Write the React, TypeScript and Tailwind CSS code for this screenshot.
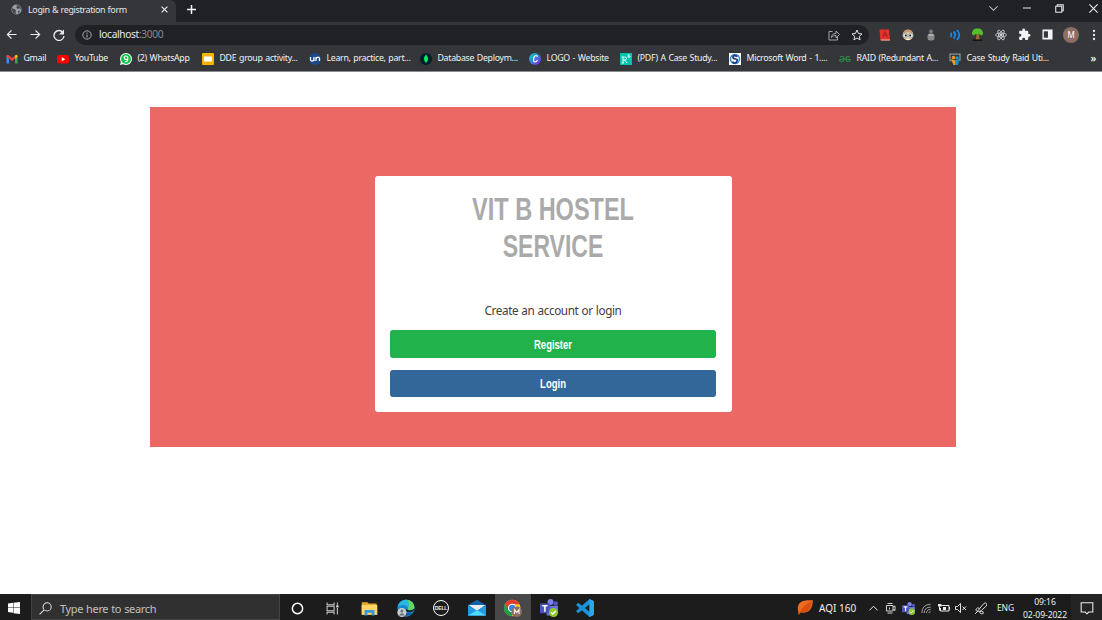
import type { ReactNode } from "react";

const UI = "font-['Noto_Sans','Open_Sans',sans-serif]";

function Ico({ s = 12, vb = "0 0 24 24", children, className = "" }: { s?: number; vb?: string; children: ReactNode; className?: string }) {
  return (
    <svg width={s} height={s} viewBox={vb} fill="none" className={"shrink-0 " + className}>
      {children}
    </svg>
  );
}

function Slot({ w, children, className = "" }: { w: string; children?: ReactNode; className?: string }) {
  return <div className={"flex h-full shrink-0 items-center justify-center " + w + " " + className}>{children}</div>;
}

const Globe = () => (
  <Ico s={11}>
    <circle cx="12" cy="12" r="11" fill="#9aa0a6" />
    <path d="M2 9c4 0 5 3 9 4l-1 4 1 5C5 21 2 17 2 12zM11 2l3 3-3 3 4 3 3-2 4 3c0-5-4-10-11-10zM15 15l5-1-4 7z" fill="#45474b" />
  </Ico>
);

function TabStrip() {
  return (
    <div className="flex h-[22px] shrink-0 bg-[#202124]">
      <div className="flex h-full w-[176px] items-center rounded-tr-[6px] bg-[#35363a] pb-[4px]">
        <span className="ml-[11px] flex"><Globe /></span>
        <span className="ml-[6px] w-[126px] text-[9px] tracking-[-0.38px] whitespace-nowrap text-[#e4e6e9] [word-spacing:0.4px]">Login &amp; registration form</span>
        <Ico s={7} className="ml-[7px]"><path d="M2 2l20 20M22 2L2 22" stroke="#e8eaed" strokeWidth="4" /></Ico>
      </div>
      <div className="flex w-[31px] items-center justify-center pb-[3px]">
        <Ico s={9}><path d="M12 0v24M0 12h24" stroke="#f1f3f4" strokeWidth="4" /></Ico>
      </div>
      <div className="ml-auto flex h-[16px]">
        <Slot w="w-[33px]"><Ico s={9}><path d="M1 6l11 11L23 6" stroke="#ccc" strokeWidth="2.700" /></Ico></Slot>
        <Slot w="w-[33px]"><Ico s={8}><path d="M0 12h24" stroke="#e8eaed" strokeWidth="3" /></Ico></Slot>
        <Slot w="w-[33px]"><Ico s={9}><path d="M2 6h16v16H2zM6 6V2h16v16h-4" stroke="#e8eaed" strokeWidth="2.800" /></Ico></Slot>
        <Slot w="w-[26px]" className="pl-[8px]"><Ico s={9}><path d="M1 1l22 22M23 1L1 23" stroke="#e8eaed" strokeWidth="3" /></Ico></Slot>
      </div>
    </div>
  );
}

function Toolbar() {
  return (
    <div className="flex h-[25px] shrink-0 items-center bg-[#35363a]">
      <Slot w="w-[23px]"><Ico s={11}><path d="M23 12H3M12 3l-9 9 9 9" stroke="#e8eaed" strokeWidth="2.700" /></Ico></Slot>
      <Slot w="w-[24px]"><Ico s={11}><path d="M1 12h20M12 3l9 9-9 9" stroke="#e8eaed" strokeWidth="2.700" /></Ico></Slot>
      <Slot w="w-[23px]"><Ico s={12}><path d="M20 7a10 10 0 1 0 2 7" stroke="#e8eaed" strokeWidth="2.700" /><path d="M22 1v10H12z" fill="#e8eaed" /></Ico></Slot>
      <div className="ml-[5px] flex h-[20px] w-[794px] shrink-0 items-center rounded-full bg-[#202124]">
        <Ico s={10} className="ml-[7px]"><circle cx="12" cy="12" r="10" stroke="#a5a9ae" strokeWidth="2.400" /><path d="M12 11v7M12 6v3" stroke="#a5a9ae" strokeWidth="2.600" /></Ico>
        <span className="ml-[7px] text-[10.200px] tracking-[-0.35px] text-[#e8eaed]">localhost<span className="text-[#868a90]">:3000</span></span>
        <div className="ml-auto flex h-full pr-[1px]">
          <Slot w="w-[23px]"><Ico s={12}><path d="M9 5H2v17h17v-6M7 17c0-6 4-8 9-8V4l7 7-7 7v-5c-5 0-7 1-9 4z" stroke="#b2b5b9" strokeWidth="1.800" /></Ico></Slot>
          <Slot w="w-[23px]"><Ico s={12}><path d="M12 2l3 7 7 .8-5.300 4.800 1.500 7.200L12 18l-6.200 3.800 1.500-7.200L2 9.800 9 9z" stroke="#e0e2e5" strokeWidth="2" /></Ico></Slot>
        </div>
      </div>
      <div className="ml-[4px] flex h-full">
        <Slot w="w-[23.3px]"><Ico s={12}><path d="M1 1h19l2 22H3z" fill="#df342b" /><path d="M3 21h19v2H4z" fill="#f0b9a9" /><path d="M8 16l4-11 5 11M9 12h6" stroke="#9c211d" strokeWidth="1.800" /></Ico></Slot>
        <Slot w="w-[23.3px]"><Ico s={12}><circle cx="12" cy="12" r="10.500" fill="#f0caa4" /><path d="M2 9Q4 1 12 1t10 8L12 6z" fill="#c69a74" /><circle cx="6.500" cy="13" r="4.700" fill="#edf7f7" stroke="#829a9c" strokeWidth="1.500" /><circle cx="17.500" cy="13" r="4.700" fill="#edf7f7" stroke="#829a9c" strokeWidth="1.500" /><circle cx="7.500" cy="13" r="2.200" fill="#222" /><circle cx="16.500" cy="13" r="2.200" fill="#222" /><path d="M9 21h6" stroke="#fff" strokeWidth="2" /></Ico></Slot>
        <Slot w="w-[23.3px]"><Ico s={12}><circle cx="12" cy="5" r="4" fill="#77797d" /><rect x="5" y="9" width="14" height="14" rx="5" fill="#88898b" /><path d="M7 12h10" stroke="#d0d0d0" strokeWidth="2" /></Ico></Slot>
        <Slot w="w-[23.3px]"><Ico s={12}><path d="M3 8q4 4 0 8M9 5q7 7 0 14M16 2q9 10 0 20" stroke="#138bec" strokeWidth="3.600" /></Ico></Slot>
        <Slot w="w-[23.3px]"><Ico s={13}><path d="M10 11h5l1 11H9z" fill="#9c642f" /><path d="M5 14a5 5 0 0 1-2-8Q5 0 12 1q7-1 9 5a5 5 0 0 1-2 8l-4-3-3 1-3-1z" fill="#55bd27" /><path d="M3 21h18v3H3z" fill="#15180e" /></Ico></Slot>
        <Slot w="w-[23.3px]"><Ico s={12}><g stroke="#c8cacc" strokeWidth="1.700"><ellipse cx="12" cy="12" rx="11" ry="4" /><ellipse cx="12" cy="12" rx="11" ry="4" transform="rotate(60 12 12)" /><ellipse cx="12" cy="12" rx="11" ry="4" transform="rotate(120 12 12)" /></g><circle cx="12" cy="12" r="2.300" fill="#ddd" /></Ico></Slot>
        <Slot w="w-[23.3px]"><Ico s={13}><path d="M20.500 11H19V7a2 2 0 0 0-2-2h-4V3.500a2.500 2.500 0 0 0-5 0V5H4a2 2 0 0 0-2 2v3.800h1.500a2.700 2.700 0 0 1 0 5.400H2V20a2 2 0 0 0 2 2h3.800v-1.500a2.700 2.700 0 0 1 5.400 0V22H17a2 2 0 0 0 2-2v-4h1.500a2.500 2.500 0 0 0 0-5z" fill="#f1f3f4" /></Ico></Slot>
        <Slot w="w-[23.3px]"><Ico s={11}><path d="M1 1h22v22H1z" fill="#f1f3f4" /><path d="M4 5h9v14H4z" fill="#35363a" /></Ico></Slot>
        <Slot w="w-[23.3px]"><span className="flex size-[16px] items-center justify-center rounded-full bg-[#8d6e63] text-[8px] text-white">M</span></Slot>
        <Slot w="w-[19px]" className="pl-[3px]"><Ico s={12}><circle cx="12" cy="4" r="2.300" fill="#eee" /><circle cx="12" cy="12" r="2.300" fill="#eee" /><circle cx="12" cy="20" r="2.300" fill="#eee" /></Ico></Slot>
      </div>
    </div>
  );
}

const bookmarks: { w: string; label: string; icon: ReactNode }[] = [
  { w: "w-[51px]", label: "Gmail", icon: <><path d="M1 5v16h5V11z" fill="#4285f4" /><path d="M23 5v16h-5V11z" fill="#34a853" /><path d="M1 5q2-3 5 0l6 5 6-5v6l-6 5-6-5-5-4z" fill="#ea4335" /><path d="M18 5q4-3 5 1v2l-5 4z" fill="#fbbc04" /></> },
  { w: "w-[63px]", label: "YouTube", icon: <><rect x="0" y="4" width="24" height="17" rx="4" fill="#f00" /><path d="M9.500 8.500v8l7-4z" fill="#fff" /></> },
  { w: "w-[82px]", label: "(2) WhatsApp", icon: <><circle cx="12" cy="12" r="12" fill="#fff" /><path d="M0 24l2-7 5 5z" fill="#fff" /><circle cx="12" cy="12" r="10" fill="#12c04a" /><path d="M15.500 9.500a3.500 3.500 0 1 1-7 0 3.500 3.500 0 0 1 7 0v3q0 5-6 5" stroke="#fff" strokeWidth="2.400" /></> },
  { w: "w-[107px]", label: "DDE group activity...", icon: <><rect width="24" height="24" rx="2" fill="#f4b400" /><path d="M4 7h16v10H4z" fill="#fff" /></> },
  { w: "w-[111px]", label: "Learn, practice, part...", icon: <><circle cx="12" cy="12" r="12" fill="#1b4b88" /><path d="M3 8v5q0 3 3 3t4-3V8v8M14 16V8v4q1-4 4-4t3 3v5" stroke="#fff" strokeWidth="2.500" /></> },
  { w: "w-[109px]", label: "Database Deploym...", icon: <><circle cx="12" cy="12" r="12" fill="#001e2b" /><path d="M12 3q8 9 0 17Q4 12 12 3z" fill="#00ed64" /></> },
  { w: "w-[91px]", label: "LOGO - Website", icon: <><defs><linearGradient id="cv" x1="0" y1="0" x2="1" y2="1"><stop offset=".15" stopColor="#00c4cc" /><stop offset=".9" stopColor="#7d2ae8" /></linearGradient></defs><circle cx="12" cy="12" r="12" fill="url(#cv)" /><path d="M16 8q1-3-2-3c-5 0-7 12-2 13q3 0 5-4" stroke="#fff" strokeWidth="2.300" /></> },
  { w: "w-[109px]", label: "(PDF) A Case Study...", icon: <><path d="M0 0h24v24H0z" fill="#00c2ae" /><path d="M6 20V8h3q4 0 4 3t-4 3H6m3 0l5 6M3 20h5M3 8h3M20 4q-4-2-4 2t4 2V6" stroke="#fff" strokeWidth="1.900" /></> },
  { w: "w-[110px]", label: "Microsoft Word - 1....", icon: <><path d="M0 0h24v24H0z" fill="#fff" /><circle cx="12" cy="12" r="9" stroke="#3c87c8" strokeWidth="3" /><path d="M17 7q-8-4-9 0t5 5 2 6-8-1" stroke="#123b83" strokeWidth="3.500" /></> },
  { w: "w-[110px]", label: "RAID (Redundant A...", icon: <path d="M2 8q8-3 8 4t-8 4q-3-4 8-4h4q11 0 8 4-8 3-8-4t8-4" stroke="#2f8d46" strokeWidth="2.300" /> },
  { w: "w-[120px]", label: "Case Study Raid Uti...", icon: <><path d="M5 15H2V2h20v12h-4" stroke="#88949c" strokeWidth="2.500" /><circle cx="9" cy="9" r="3.500" fill="#f49a20" /><circle cx="16" cy="10" r="3.500" fill="#1498cb" /><path d="M4 12l9 3v9H9z" fill="#f49a20" /><path d="M12 14h8l-2 10h-5z" fill="#1498cb" /></> },
];

function Bookmarks() {
  return (
    <div className="flex h-[25px] shrink-0 items-center border-b border-[#8c8c90] bg-[#35363a] pb-[1px] pl-[6px] text-[8.800px] tracking-[-0.3px] text-[#f1f3f4] [word-spacing:0.7px]">
      {bookmarks.map((b) => (
        <div key={b.label} className={"flex shrink-0 items-center whitespace-nowrap " + b.w}>
          <Ico s={12}>{b.icon}</Ico>
          <span className="ml-[5.500px]">{b.label}</span>
        </div>
      ))}
      <span className="ml-auto pr-[6px] pb-[2px] text-[10px] font-semibold">»</span>
    </div>
  );
}

function Taskbar() {
  return (
    <div className="flex h-[26px] shrink-0 items-center bg-[#1c1c1c] text-[#f0f0f0]">
      <Slot w="w-[27px]" className="pt-[2px]"><Ico s={12}><path d="M0 3l10-1.500V11H0zM11 1.400L24 0v11H11zM0 12h10v9.500L0 20zM11 12h13v12l-13-1.500z" fill="#fff" /></Ico></Slot>
      <div className="ml-[4px] flex h-full w-[249px] items-center border border-[#444] bg-[#303030] pt-[2px]">
        <Ico s={13} className="ml-[7px]"><circle cx="15" cy="9" r="7.500" stroke="#ddd" strokeWidth="1.900" /><path d="M9.500 14.500L1 23" stroke="#ddd" strokeWidth="2" /></Ico>
        <span className="ml-[8px] text-[11px] tracking-[-0.35px] text-[#c2c2c2] [word-spacing:0.5px]">Type here to search</span>
      </div>
      <div className="flex h-full">
        <Slot w="w-[35px]" className="pt-[2px]"><Ico s={13}><circle cx="12" cy="12" r="9.500" stroke="#fff" strokeWidth="2.700" /></Ico></Slot>
        <Slot w="w-[35px]" className="pt-[2px]"><Ico s={13}><path d="M2 1v4h13V1M2 23v-4h13v4M2 8h13v8H2zM21 1v4M21 11v12" stroke="#ccc" strokeWidth="1.900" /><path d="M19 6h4v4h-4z" fill="#eee" /></Ico></Slot>
        <Slot w="w-[38px]" className="pt-[2px]"><Ico s={17}><path d="M1 3h8l2 2h11v15H1z" fill="#e8a820" /><path d="M1 7h22v14H1z" fill="#ffd667" /><path d="M5 22v-8h14v8h-4v-4H9v4z" fill="#3a96da" /></Ico></Slot>
        <Slot w="w-[35px]" className="pt-[2px]"><Ico s={18}><circle cx="12" cy="12" r="11.500" fill="#158bd5" /><path d="M1 10Q4 1 12 1c7 0 11 5 11 10 0 4-6 5-9 3 3-4-3-9-13-4z" fill="#27b9dd" /><path d="M14 1q9 3 9 10 0 4-6 4l-3-1q4-6 0-13z" fill="#64d85b" /><path d="M14 14q3 3 9-1-1 3-3 4-6 2-10-3z" fill="#1c1c1c" /><path d="M9 11q-3 9 12 8-5 5-12 3-6-4 0-11z" fill="#1257a2" /><circle cx="6.500" cy="18" r="6" fill="#c9cdd0" /><circle cx="6.500" cy="16" r="2" fill="#65717b" /><path d="M2.500 22q4-6 8 0z" fill="#65717b" /></Ico></Slot>
        <Slot w="w-[36px]" className="pt-[2px]"><span className="flex size-[16px] items-center justify-center rounded-full border border-white font-['Liberation_Sans',sans-serif] text-[5px] font-bold tracking-[-0.2px]">DELL</span></Slot>
        <Slot w="w-[36px]" className="pt-[2px]"><Ico s={18}><path d="M0 8l12-7 12 7v14H0z" fill="#0d61a9" /><path d="M1 8h22L12 16z" fill="#e9edf1" /><path d="M0 8l12 8 12-8v14H0z" fill="#1e9be4" /><path d="M0 22l12-7 12 7z" fill="#50d9ff" /></Ico></Slot>
        <Slot w="w-[36px]" className="bg-[#484848] pt-[2px]"><Ico s={18}><circle cx="11" cy="12" r="11" fill="#f7c51e" /><path d="M1 7Q5 1 11 1t10 6H11z" fill="#e33b2e" /><path d="M1 7a11 11 0 0 0 9 16l5-9-8 0z" fill="#229e4b" /><path d="M1 7l6 8 4-8z" fill="#e33b2e" /><circle cx="11" cy="12" r="5" fill="#3b82e8" stroke="#fff" strokeWidth="1.500" /><circle cx="17" cy="17" r="7" fill="#8d6e63" /><path d="M14 20v-6l3 4 3-4v6" stroke="#eee" strokeWidth="1.500" /></Ico></Slot>
        <Slot w="w-[36px]" className="pt-[2px]"><TeamsIcon s={18} /></Slot>
        <Slot w="w-[36px]" className="pt-[2px]"><Ico s={18}><path d="M18 0l6 3v18l-6 3L0 8l3-3 15 12V7L3 19l-3-3z" fill="#1894d9" /><path d="M18 0l6 3v18l-6 3z" fill="#2aa8ed" /></Ico></Slot>
      </div>
      <div className="ml-auto flex h-full items-center">
        <div className="flex h-full items-center pt-[2px]">
          <Slot w="w-[22px]"><Ico s={16} className="-mt-[2px]"><path d="M2 20C-1 6 5 1 24 2c-1 15-7 20-18 18l-4 4z" fill="#ef6b20" /><path d="M3 21Q9 9 22 3c0 13-7 19-16 17z" fill="#d8500e" /></Ico></Slot>
          <span className="ml-[3px] w-[46px] text-[10px] whitespace-nowrap">AQI 160</span>
          <Slot w="w-[17px]"><Ico s={9}><path d="M1 17L12 6l11 11" stroke="#eee" strokeWidth="2.600" /></Ico></Slot>
          <Slot w="w-[18px]"><Ico s={12}><path d="M3 7h13v11H3zM16 10l4-2v9l-4-2M5 3h10M5 22h10M9 11v4" stroke="#ddd" strokeWidth="1.900" /></Ico></Slot>
          <Slot w="w-[17px]"><TeamsIcon s={13} /></Slot>
          <Slot w="w-[18px]"><Ico s={11}><g stroke="#aaa" strokeWidth="2"><path d="M2 22Q2 3 21 3M7 22Q7 9 21 9M12 22q0-8 9-8M17 22q0-3 4-3" /></g></Ico></Slot>
          <Slot w="w-[17px]"><Ico s={12}><path d="M7 7h15v11H5v-6" stroke="#eee" strokeWidth="2" /><path d="M10 10h6v6h-6zM0 4h7v5H0zM22 10h2v5h-2z" fill="#eee" /><path d="M3 9v8" stroke="#eee" strokeWidth="2" /></Ico></Slot>
          <Slot w="w-[17px]"><Ico s={12}><path d="M1 9h4l6-6v18l-6-6H1zM15 9l7 7M22 9l-7 7" stroke="#eee" strokeWidth="1.900" /></Ico></Slot>
          <Slot w="w-[23px]"><Ico s={13}><path d="M8 15L18 3q3-3 5 0t-1 5L11 18M11 12q-5-3-7 1t4 4h6q5 1 3 4t-6-1l-2-3M2 22l6-6" stroke="#ddd" strokeWidth="1.800" /></Ico></Slot>
          <Slot w="w-[27px]"><span className="text-[8.500px] tracking-[-0.1px]">ENG</span></Slot>
        </div>
        <div className="flex w-[52px] flex-col items-center pt-[3px] text-[8.600px] leading-[13px] tracking-[-0.08px] whitespace-nowrap"><span>09:16</span><span>02-09-2022</span></div>
        <Slot w="w-[31px]" className="bg-[#242424] pt-[2px]"><Ico s={14}><path d="M2 3h20v16h-7l-3 3-3-3H2z" stroke="#eee" strokeWidth="1.800" /></Ico></Slot>
      </div>
    </div>
  );
}

function TeamsIcon({ s }: { s: number }) {
  return (
    <Ico s={s}><circle cx="14" cy="4" r="4" fill="#7b83eb" /><circle cx="21" cy="6" r="3" fill="#5059c9" /><path d="M8 9h16v8q-1 5-5 5H9z" fill="#6971d8" /><path d="M0 6h13v13H0z" fill="#4b53bc" /><path d="M3 9h7M6.500 9v8" stroke="#fff" strokeWidth="2" /><circle cx="18" cy="18" r="6" fill="#91c832" /><path d="M15 18l2 2 4-4" stroke="#fff" strokeWidth="1.800" /></Ico>
  );
}

export default function App() {
  return (
    <div className={"flex h-[620px] w-[1102px] flex-col overflow-hidden bg-white leading-none " + UI}>
      <TabStrip />
      <Toolbar />
      <Bookmarks />
      <main className="flex-1 pt-[34.500px] pl-[150px]">
        <section className="h-[340.500px] w-[806px] bg-[#ec6864] pt-[69.500px] pl-[225px]">
          <div className="flex h-[236px] w-[356.500px] flex-col items-stretch rounded-[3px] bg-white pr-[15.500px] pl-[15px] text-center font-['Liberation_Sans',sans-serif]">
            <h1 className="mt-[14.500px] h-[76px] text-[31px] leading-[37.700px] font-bold text-[#aaa]"><span className="block scale-x-[.758]">VIT B HOSTEL</span><span className="block scale-x-[.742]">SERVICE</span></h1>
            <p className="mt-[35px] h-[16px] font-['Noto_Sans','Open_Sans',sans-serif] text-[11.700px] leading-[16px] tracking-[-0.38px] text-[#404040] [word-spacing:0.5px]">Create an account or login</p>
            <button className="mt-[12.500px] h-[27.500px] rounded-[3px] bg-[#22b24c] pt-[2px] text-[12.500px] font-bold text-white"><span className="inline-block scale-x-[.76]">Register</span></button>
            <button className="mt-[12px] h-[27px] rounded-[3px] bg-[#336699] pt-[2px] text-[12.500px] font-bold text-white"><span className="inline-block scale-x-[.76]">Login</span></button>
          </div>
        </section>
      </main>
      <Taskbar />
    </div>
  );
}
